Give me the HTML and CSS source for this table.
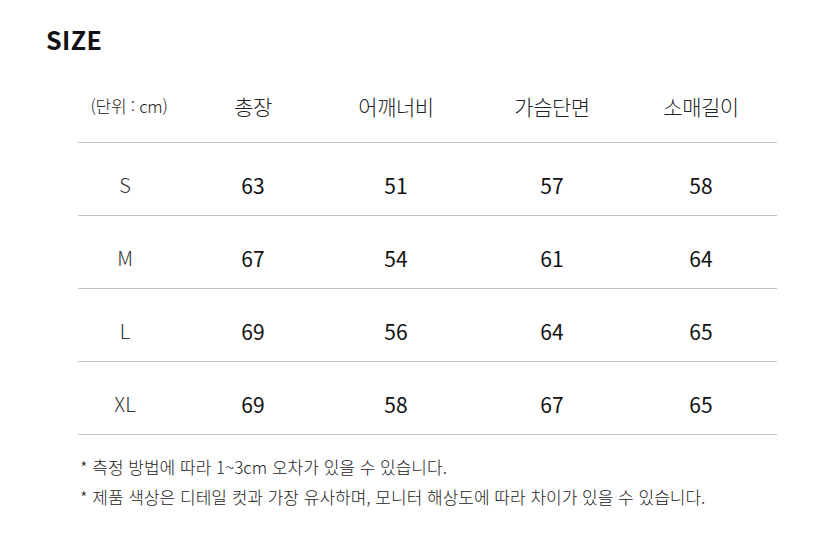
FILE: index.html
```html
<!DOCTYPE html>
<html lang="ko">
<head>
<meta charset="utf-8">
<link rel="stylesheet" href="styles.css">
</head>
<body>
<div class="page">
  <h1 class="title">SIZE</h1>
  <div class="table">
    <div class="row head">
      <div class="c c1 unit">(단위 : cm)</div>
      <div class="c c2">총장</div>
      <div class="c c3">어깨너비</div>
      <div class="c c4">가슴단면</div>
      <div class="c c5">소매길이</div>
    </div>
    <div class="row">
      <div class="c c1 size">S</div>
      <div class="c c2">63</div>
      <div class="c c3">51</div>
      <div class="c c4">57</div>
      <div class="c c5">58</div>
    </div>
    <div class="row">
      <div class="c c1 size">M</div>
      <div class="c c2">67</div>
      <div class="c c3">54</div>
      <div class="c c4">61</div>
      <div class="c c5">64</div>
    </div>
    <div class="row">
      <div class="c c1 size">L</div>
      <div class="c c2">69</div>
      <div class="c c3">56</div>
      <div class="c c4">64</div>
      <div class="c c5">65</div>
    </div>
    <div class="row">
      <div class="c c1 size">XL</div>
      <div class="c c2">69</div>
      <div class="c c3">58</div>
      <div class="c c4">67</div>
      <div class="c c5">65</div>
    </div>
  </div>
  <div class="notes">
    <p>* 측정 방법에 따라 1~3cm 오차가 있을 수 있습니다.</p>
    <p>* 제품 색상은 디테일 컷과 가장 유사하며, 모니터 해상도에 따라 차이가 있을 수 있습니다.</p>
  </div>
</div>
</body>
</html>
```

FILE: styles.css
```css
html, body {
  margin: 0;
  padding: 0;
  background: #fff;
}
body {
  font-family: "Noto Sans CJK KR", "Noto Sans", sans-serif;
  color: #111;
}
.page {
  width: 835px;
  height: 548px;
  box-sizing: border-box;
  padding: 24px 0 0 0;
}
.title {
  margin: 0 0 0 46px;
  font-size: 25px;
  font-weight: 700;
  line-height: 30px;
  letter-spacing: 0.4px;
  color: #111;
}
.table {
  margin: 34px 0 0 78px;
  width: 699px;
}
.row {
  display: flex;
  border-bottom: 1px solid #c4c4c4;
  height: 73px;
  align-items: center;
  padding-top: 11px;
  box-sizing: border-box;
}
.row.head {
  height: 55px;
  padding-top: 0;
  padding-bottom: 18px;
}
.c {
  box-sizing: border-box;
  text-align: center;
  font-size: 21px;
  line-height: 28px;
  color: #111;
}
.c1 { width: 94px; }
.c2 { width: 162px; }
.c3 { width: 124px; }
.c4 { width: 188px; }
.c5 { width: 110px; }
.head .c {
  font-size: 21px;
  font-weight: 300;
  color: #222;
  letter-spacing: -0.5px;
}
.head .unit {
  font-size: 17px;
  letter-spacing: -0.3px;
  font-weight: 300;
  color: #222;
  padding-left: 8px;
  white-space: nowrap;
}
.size {
  font-weight: 300;
  color: #333;
  font-size: 20px;
}
.notes {
  margin: 17px 0 0 80px;
}
.notes p {
  margin: 0;
  font-size: 17px;
  font-weight: 300;
  line-height: 30px;
  color: #222;
  letter-spacing: 0;
  white-space: nowrap;
}
```
